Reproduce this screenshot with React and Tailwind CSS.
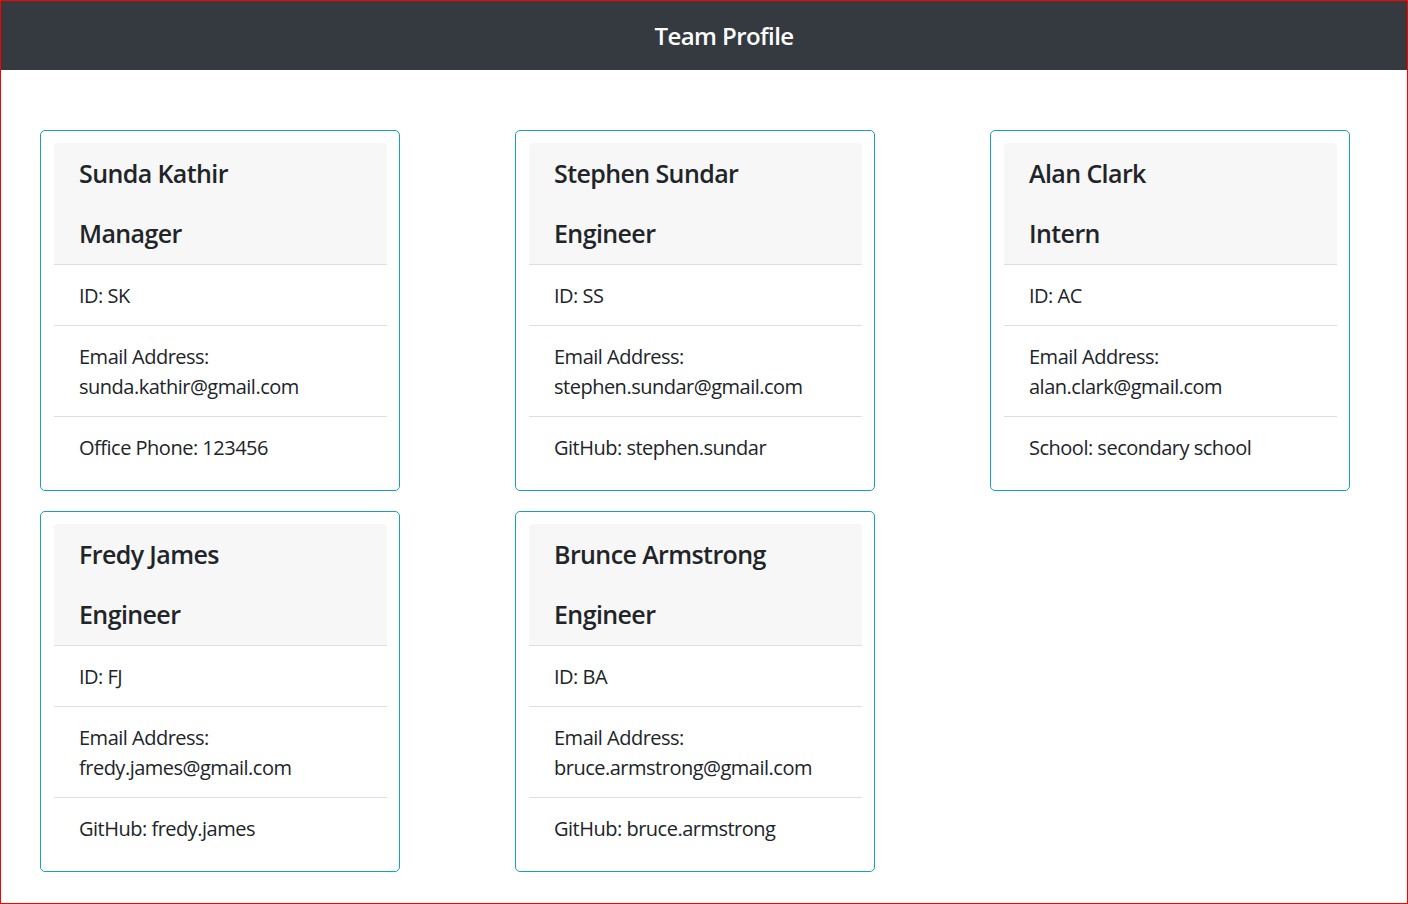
import React from "react";

const team = [
  { name: "Sunda Kathir", role: "Manager", id: "SK", email: "sunda.kathir@gmail.com", extra: "Office Phone: 123456" },
  { name: "Stephen Sundar", role: "Engineer", id: "SS", email: "stephen.sundar@gmail.com", extra: "GitHub: stephen.sundar" },
  { name: "Alan Clark", role: "Intern", id: "AC", email: "alan.clark@gmail.com", extra: "School: secondary school" },
  { name: "Fredy James", role: "Engineer", id: "FJ", email: "fredy.james@gmail.com", extra: "GitHub: fredy.james" },
  { name: "Brunce Armstrong", role: "Engineer", id: "BA", email: "bruce.armstrong@gmail.com", extra: "GitHub: bruce.armstrong" },
];

function Card({ m }) {
  return (
    <div className="w-[360px] rounded-[5px] border border-[#17a2b8] bg-white pt-[12px] pr-[12px] pb-[13px] pl-[13px]">
      <div className="rounded-t-[4px] bg-[#f7f7f7] border-b border-[#dfdfdf] px-[25px] pt-[15px] pb-[16px] text-[25px] font-semibold leading-[30px] tracking-[-0.6px] text-[#212529]">
        <div>{m.name}</div>
        <div className="mt-[30px]">{m.role}</div>
      </div>
      <div className="px-[25px] pt-[16px] pb-[14px] border-b border-[#dfdfdf]">ID: {m.id}</div>
      <div className="px-[25px] pt-[16px] pb-[14px] border-b border-[#dfdfdf]">
        <div>Email Address:</div>
        <div>{m.email}</div>
      </div>
      <div className="px-[25px] pt-[16px] pb-[14px]">{m.extra}</div>
    </div>
  );
}

export default function App() {
  return (
    <div
      className="h-[904px] w-[1408px] border border-[#ff0000] bg-white text-[20px] leading-[30px] tracking-[-0.5px] text-[#212529]"
      style={{ fontFamily: '"Open Sans", "Noto Sans", sans-serif' }}
    >
      <div className="flex h-[69px] items-center justify-center bg-[#343a40] pl-[40px]">
        <span className="text-[24px] font-semibold tracking-[-0.6px] text-white">Team Profile</span>
      </div>
      <div className="grid grid-cols-[360px_360px_360px] gap-x-[115px] gap-y-[20px] pl-[39px] pt-[60px]">
        {team.map((m) => (
          <Card key={m.id} m={m} />
        ))}
      </div>
    </div>
  );
}
